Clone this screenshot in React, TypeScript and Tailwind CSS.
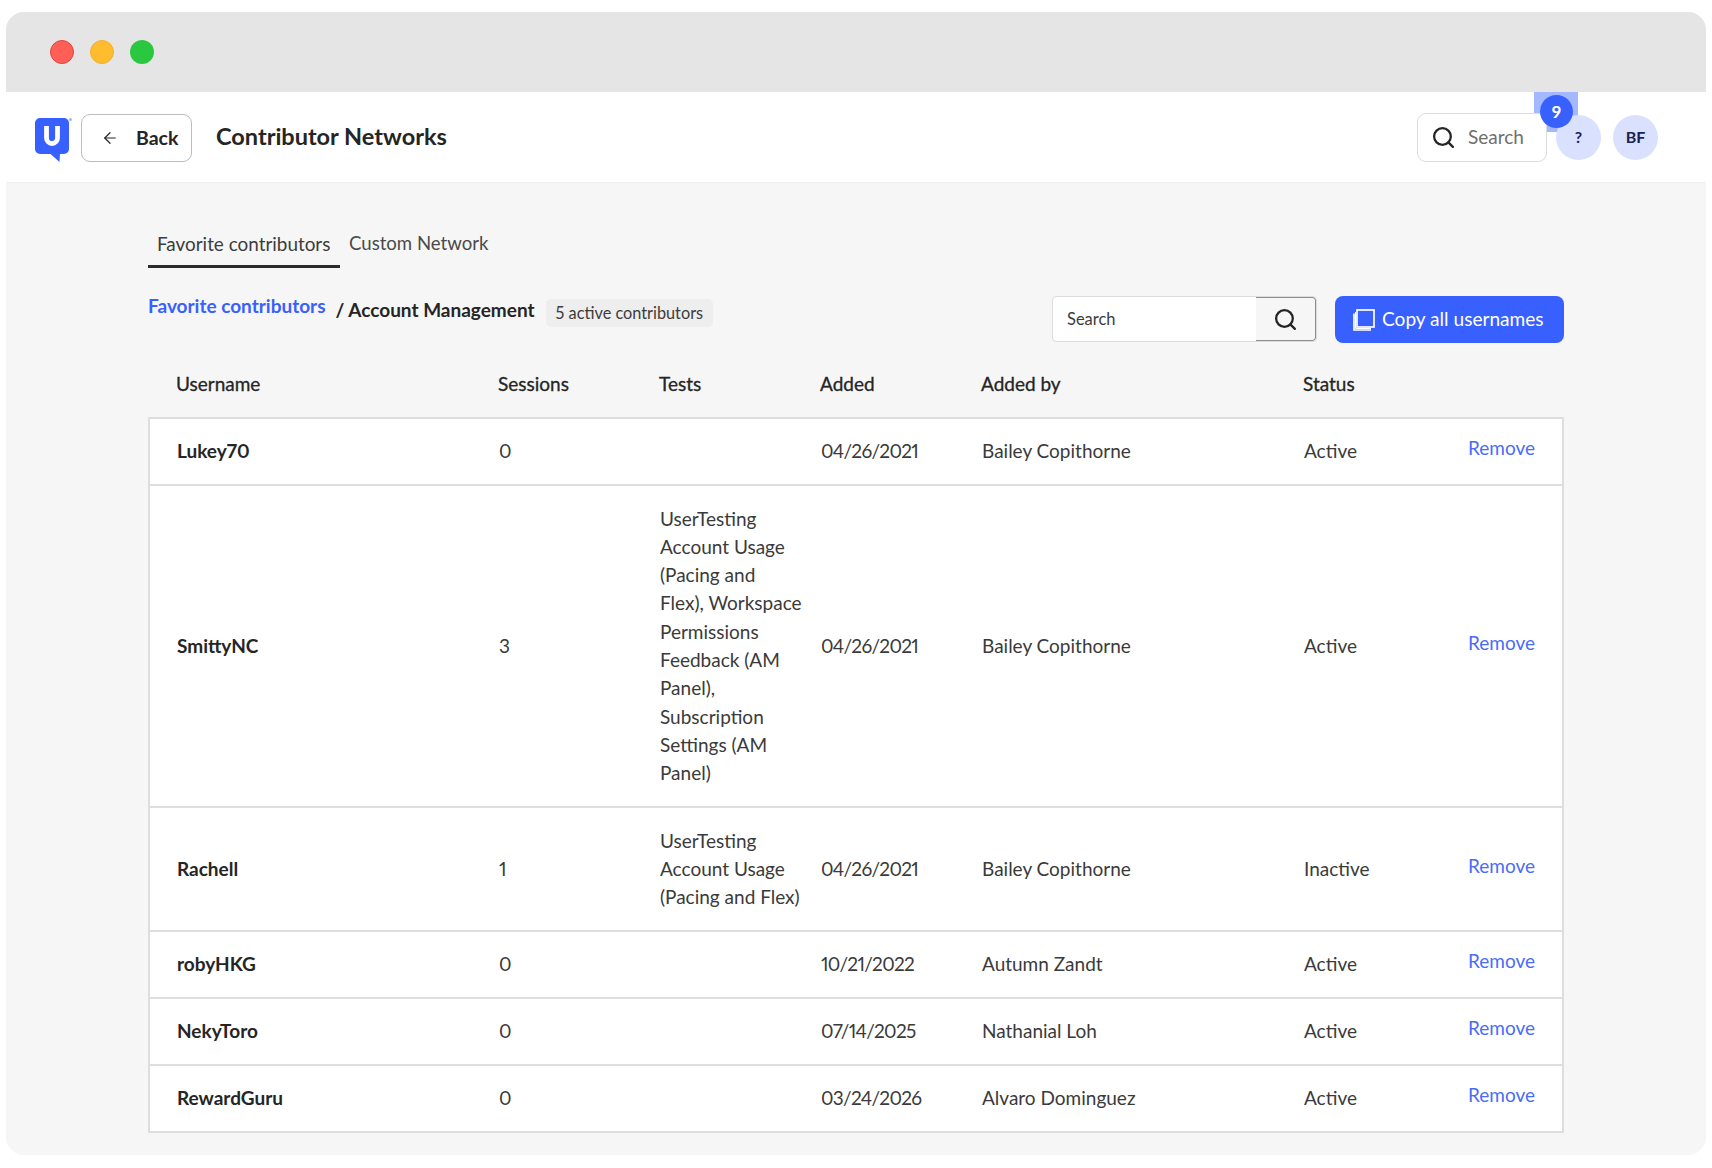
import React from "react";
import { ArrowLeft, Search } from "lucide-react";

interface Contributor {
  name: string;
  sessions: string;
  tests: string[];
  added: string;
  addedBy: string;
  status: string;
  height: string;
}

const contributors: Contributor[] = [
  { name: "Lukey70", sessions: "0", tests: [], added: "04/26/2021", addedBy: "Bailey Copithorne", status: "Active", height: "h-[67px]" },
  {
    name: "SmittyNC",
    sessions: "3",
    tests: [
      "UserTesting",
      "Account Usage",
      "(Pacing and",
      "Flex), Workspace",
      "Permissions",
      "Feedback (AM",
      "Panel),",
      "Subscription",
      "Settings (AM",
      "Panel)",
    ],
    added: "04/26/2021",
    addedBy: "Bailey Copithorne",
    status: "Active",
    height: "h-[322px]",
  },
  {
    name: "Rachell",
    sessions: "1",
    tests: ["UserTesting", "Account Usage", "(Pacing and Flex)"],
    added: "04/26/2021",
    addedBy: "Bailey Copithorne",
    status: "Inactive",
    height: "h-[124px]",
  },
  { name: "robyHKG", sessions: "0", tests: [], added: "10/21/2022", addedBy: "Autumn Zandt", status: "Active", height: "h-[67px]" },
  { name: "NekyToro", sessions: "0", tests: [], added: "07/14/2025", addedBy: "Nathanial Loh", status: "Active", height: "h-[67px]" },
  { name: "RewardGuru", sessions: "0", tests: [], added: "03/24/2026", addedBy: "Alvaro Dominguez", status: "Active", height: "h-[67px]" },
];

const gridCols = "grid grid-cols-[322px_161px_161px_161px_322px_163px_1fr] items-center";

const Logo = () => (
  <svg width="38" height="46" viewBox="0 0 38 46" className="shrink-0 mt-[5px]">
    <path
      d="M6 1h24a5 5 0 0 1 5 5v26a5 5 0 0 1-5 5h-4l-0.5 8-9-8H6a5 5 0 0 1-5-5V6a5 5 0 0 1 5-5z"
      fill="#3860ff"
    />
    <path d="M12.5 9v12a5.5 5.5 0 0 0 11 0V9" fill="none" stroke="#fff" strokeWidth="4.8" />
    <circle cx="36.4" cy="2.4" r="1.5" fill="#9db2ff" />
  </svg>
);

const CopyIcon = () => (
  <svg width="24" height="24" viewBox="0 0 24 24" fill="none" stroke="#fff" strokeWidth="1.7" className="shrink-0">
    <rect x="5" y="2" width="17" height="17" />
    <path d="M2 5.5V22h17" />
    <path d="M3.5 4v16.5H19" strokeWidth="1" />
  </svg>
);

export default function App() {
  return (
    <div className="min-h-[1168px] bg-white pt-3 pl-1.5 font-['Lato','Open_Sans',sans-serif] text-[#252525] proportional-nums">
      <div className="w-[1700px] h-[1143px] rounded-[18px] overflow-hidden bg-[#f6f6f6]">
        <div className="h-20 bg-[#e5e5e5] flex items-center gap-4 pl-[44px]">
          <div className="w-6 h-6 rounded-full bg-[#ff5f57] border border-[#e0443e]" />
          <div className="w-6 h-6 rounded-full bg-[#febc2e] border border-[#f5b02a]" />
          <div className="w-6 h-6 rounded-full bg-[#2ac840]" />
        </div>

        <header className="relative h-[91px] bg-white border-b border-[#f0f0f0] flex items-center pl-[28px]">
          <Logo />
          <button className="ml-[9px] mt-[2px] w-[111px] h-[48px] rounded-[9px] border border-[#bdbdbd] flex items-center pl-[19px] text-[19.5px] font-bold">
            <ArrowLeft size={18} strokeWidth={1.6} />
            <span className="ml-[17px]">Back</span>
          </button>
          <h1 className="ml-[24px] text-[23.5px] font-bold">Contributor Networks</h1>

          <div className="ml-auto mr-[48px] flex items-center relative z-10">
            <div className="mt-[1px] w-[130px] h-[49px] rounded-[9px] border border-[#dcdcdc] flex items-center pl-[13px] gap-[12px] text-[#6f6f6f] text-[19px] bg-white">
              <Search size={25} strokeWidth={2.2} className="text-[#252525]" />
              <span>Search</span>
            </div>
            <div className="ml-[9px] w-[45px] h-[45px] rounded-full bg-[#d9e1ff] flex items-center justify-center text-[16px] font-bold text-[#1a2352]">?</div>
            <div className="ml-[12px] w-[45px] h-[45px] rounded-full bg-[#d9e1ff] flex items-center justify-center text-[16px] font-bold text-[#1a2352]">BF</div>
          </div>

          <div className="absolute left-[1528px] top-0 w-[44px] h-[40px] bg-[#a3b8ff]" />
          <div className="absolute left-[1534px] top-[3px] w-[33px] h-[33px] rounded-full bg-[#3860ff] text-white flex items-center justify-center text-[17px] font-bold z-20">9</div>
        </header>

        <main className="pl-[142px] w-[1558px]">
          <div className="flex pt-[38px] text-[19px]">
            <div className="w-[192px] h-[47px] pl-[9px] pt-[9px] border-b-[3px] border-[#2a2a2a] text-[18.9px] text-[#3c3c3c]">Favorite contributors</div>
            <div className="pl-[9px] pt-[9px] text-[18.6px] text-[#4a4a4a]">Custom Network</div>
          </div>

          <div className="flex items-start justify-between mt-[28px] h-[47px]">
            <div className="flex items-start">
              <a className="text-[#3860ff] font-bold text-[19px] mt-[-4px]">Favorite contributors</a>
              <span className="ml-[10px] font-bold text-[19px] mt-[0px] whitespace-nowrap">/ Account Management</span>
              <span className="ml-[11px] mt-[3px] h-[28px] px-[10px] rounded-[5px] bg-[#eeeeee] text-[16.3px] text-[#3c3c3c] flex items-center">5 active contributors</span>
            </div>
            <div className="flex items-start">
              <div className="w-[265px] h-[46px] rounded-[4px] border border-[#dcdcdc] flex overflow-hidden bg-white">
                <div className="flex-1 pl-[14px] flex items-center text-[16.5px] text-[#3c3c3c]">Search</div>
                <div className="w-[60px] bg-[#f6f6f6] border border-[#8d8d8d] border-l-0 rounded-r-[4px] flex items-center justify-center">
                  <Search size={25} strokeWidth={2.2} />
                </div>
              </div>
              <button className="ml-[18px] w-[229px] h-[47px] rounded-[8px] bg-[#3860ff] text-white flex items-center pl-[17px] gap-[6px] text-[19.1px]">
                <CopyIcon />
                Copy all usernames
              </button>
            </div>
          </div>

          <div className={`${gridCols} h-[74px] pl-[28px] pt-[8px] text-[19px] [-webkit-text-stroke:0.3px]`}>
            <div>Username</div>
            <div>Sessions</div>
            <div>Tests</div>
            <div>Added</div>
            <div>Added by</div>
            <div>Status</div>
          </div>

          <div className="w-[1416px] border-2 border-[#dedede] border-b-0 bg-white">
            {contributors.map((c) => (
              <div key={c.name} className={`${gridCols} ${c.height} pl-[27px] border-b-2 border-[#dedede] text-[19px] text-[#3a3a3a]`}>
                <div className="font-bold text-[#252525]">{c.name}</div>
                <div>{c.sessions}</div>
                <div className="leading-[28.3px] whitespace-nowrap">
                  {c.tests.map((line) => (
                    <div key={line}>{line}</div>
                  ))}
                </div>
                <div className="tracking-[-0.7px]">{c.added}</div>
                <div>{c.addedBy}</div>
                <div>{c.status}</div>
                <a className="text-[#4a6cf7] mt-[-6px] justify-self-end mr-[27px]">Remove</a>
              </div>
            ))}
          </div>
        </main>
      </div>
    </div>
  );
}
